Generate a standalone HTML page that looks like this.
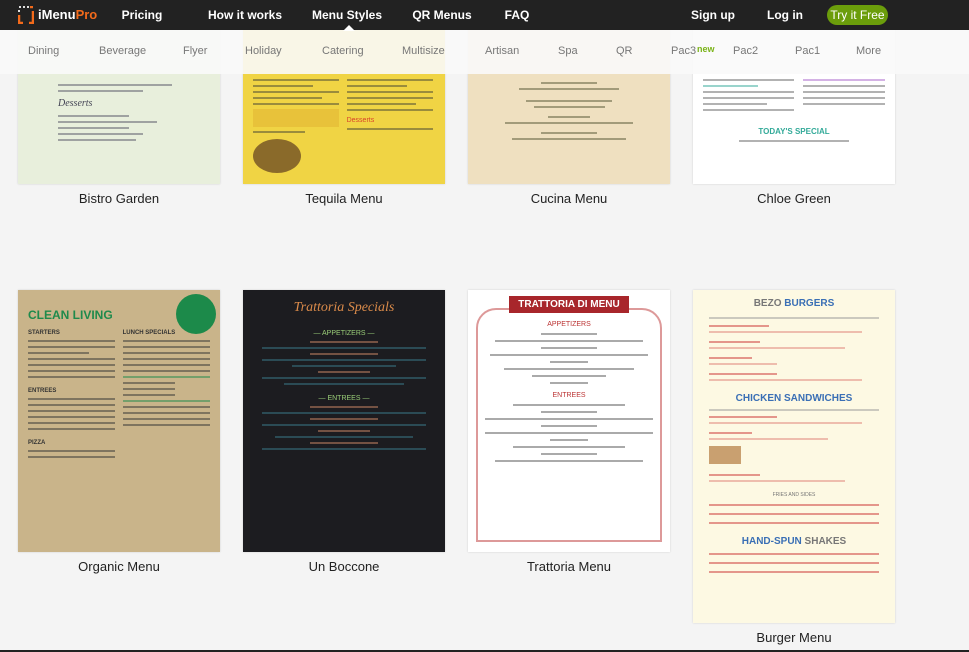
<!DOCTYPE html>
<html><head><meta charset="utf-8"><style>
*{margin:0;padding:0;box-sizing:border-box}
body{width:969px;height:652px;overflow:hidden;background:#f4f4f4;font-family:"Liberation Sans",sans-serif;position:relative}
.nav{position:absolute;top:0;left:0;width:969px;height:30px;background:#222;z-index:10}
.nav a{position:absolute;top:8px;color:#fff;font-size:12px;font-weight:bold;transform:translateX(-50%);white-space:nowrap}
.try{position:absolute;left:827px;top:5px;width:61px;height:20px;border-radius:10px;background:#6b9d0b;color:#fff;font-size:12px;text-align:center;line-height:20px}
.tri{position:absolute;left:343px;top:25px;width:0;height:0;border-left:6px solid transparent;border-right:6px solid transparent;border-bottom:6px solid #fff;z-index:11}
.sub{position:absolute;top:30px;left:0;width:969px;height:44px;background:rgba(250,250,250,0.9);z-index:9}
.sub span{position:absolute;top:15px;font-size:11px;color:#777}
.th{position:absolute;overflow:hidden;box-shadow:0 0 2px rgba(0,0,0,.15)}
.cap{position:absolute;font-size:13px;color:#222;text-align:center;width:202px}
.l{height:2px;margin:4px 0;background:currentColor;opacity:.5}
</style></head><body>
<div class="nav">
<svg style="position:absolute;left:18px;top:6px" width="16" height="18" viewBox="0 0 16 18"><path d="M1 1h2M5 1h2M9 1h2M1 4v2" stroke="#ddd" stroke-width="2" fill="none"/><path d="M1 9v8h4M11 17h4V5M12 1h3" stroke="#f26a1b" stroke-width="2.5" fill="none"/></svg>
<div style="position:absolute;left:38px;top:7px;font-size:13px;font-weight:bold;color:#fff">iMenu<span style="color:#f26a1b">Pro</span></div>
<a style="left:142px">Pricing</a><a style="left:245px">How it works</a><a style="left:347px">Menu Styles</a><a style="left:442px">QR Menus</a><a style="left:517px">FAQ</a><a style="left:713px">Sign up</a><a style="left:785px">Log in</a>
<div class="try">Try it Free</div>
</div>
<div class="tri"></div>
<div class="sub">
<span style="left:28px">Dining</span><span style="left:99px">Beverage</span><span style="left:183px">Flyer</span><span style="left:245px">Holiday</span><span style="left:322px">Catering</span><span style="left:402px">Multisize</span><span style="left:485px">Artisan</span><span style="left:558px">Spa</span><span style="left:616px">QR</span><span style="left:671px">Pac3</span><span style="left:697px;top:14px;font-size:9px;color:#7ab317;font-weight:bold">new</span><span style="left:733px">Pac2</span><span style="left:795px">Pac1</span><span style="left:856px">More</span>
</div>

<!-- row 1 -->
<div class="th" style="left:18px;top:20px;width:202px;height:164px;background:#e8efdc;color:#556;padding:60px 20px 0 40px">
<div class="l" style="width:80%"></div><div class="l" style="width:60%"></div>
<div style="font-family:'Liberation Serif';font-style:italic;font-size:10px;color:#445;margin:6px 0">Desserts</div>
<div class="l" style="width:50%"></div><div class="l" style="width:70%"></div><div class="l" style="width:50%"></div><div class="l" style="width:60%"></div><div class="l" style="width:55%"></div>
</div>
<div class="th" style="left:243px;top:20px;width:202px;height:164px;background:#f0d444;color:#443;padding:55px 12px 0 10px">
<div style="width:48%;float:left"><div class="l"></div><div class="l" style="width:70%"></div><div class="l"></div><div class="l" style="width:80%"></div><div class="l"></div><div style="height:18px;background:#e8c23a;margin:4px 0"></div><div class="l" style="width:60%"></div><div style="width:48px;height:34px;border-radius:50%;background:#8a6a2a;margin-top:6px"></div></div>
<div style="width:48%;float:right"><div class="l"></div><div class="l" style="width:70%"></div><div class="l"></div><div class="l"></div><div class="l" style="width:80%"></div><div class="l"></div><div style="color:#d9452b;font-size:7px;margin-top:6px">Desserts</div><div class="l"></div></div>
</div>
<div class="th" style="left:468px;top:20px;width:202px;height:164px;background:#efe0c0;color:#553;padding:58px 30px 0;text-align:center">
<div class="l" style="width:40%;margin:4px auto"></div><div class="l" style="width:70%;margin:4px auto"></div><div class="l" style="width:60%;margin:10px auto 4px"></div><div class="l" style="width:50%;margin:4px auto"></div><div class="l" style="width:30%;margin:8px auto 4px"></div><div class="l" style="width:90%;margin:4px auto"></div><div class="l" style="width:40%;margin:8px auto 4px"></div><div class="l" style="width:80%;margin:4px auto"></div>
</div>
<div class="th" style="left:693px;top:20px;width:202px;height:164px;background:#fff;color:#666;padding:55px 10px 0">
<div style="width:50%;float:left"><div class="l"></div><div class="l" style="width:60%;color:#3a9"></div><div class="l"></div><div class="l"></div><div class="l" style="width:70%"></div><div class="l"></div></div>
<div style="width:45%;float:right"><div class="l" style="color:#a6c"></div><div class="l"></div><div class="l"></div><div class="l"></div><div class="l"></div></div>
<div style="clear:both;text-align:center;color:#3a9;font-size:8px;font-weight:bold;padding-top:12px">TODAY'S SPECIAL</div>
<div class="l" style="width:60%;margin:4px auto"></div>
</div>
<div class="cap" style="left:18px;top:191px">Bistro Garden</div>
<div class="cap" style="left:243px;top:191px">Tequila Menu</div>
<div class="cap" style="left:468px;top:191px">Cucina Menu</div>
<div class="cap" style="left:693px;top:191px">Chloe Green</div>

<!-- row 2 -->
<div class="th" style="left:18px;top:290px;width:202px;height:262px;background:#c9b48a;color:#333;padding:10px 10px">
<div style="color:#1f8a4c;font-weight:bold;font-size:12px;margin-top:8px">CLEAN LIVING</div>
<div style="position:absolute;right:4px;top:4px;width:40px;height:40px;border-radius:50%;background:#1c8a4a"></div>
<div style="width:48%;float:left;margin-top:8px"><div style="font-size:6px;font-weight:bold">STARTERS</div><div class="l"></div><div class="l"></div><div class="l" style="width:70%"></div><div class="l"></div><div class="l"></div><div class="l"></div><div class="l"></div><div style="font-size:6px;font-weight:bold;margin-top:10px">ENTREES</div><div class="l"></div><div class="l"></div><div class="l"></div><div class="l"></div><div class="l"></div><div class="l"></div><div style="font-size:6px;font-weight:bold;margin-top:10px">PIZZA</div><div class="l"></div><div class="l"></div></div>
<div style="width:48%;float:right;margin-top:8px"><div style="font-size:6px;font-weight:bold">LUNCH SPECIALS</div><div class="l"></div><div class="l"></div><div class="l"></div><div class="l"></div><div class="l"></div><div class="l"></div><div class="l" style="color:#1f8a4c"></div><div class="l" style="width:60%"></div><div class="l" style="width:60%"></div><div class="l" style="width:60%"></div><div class="l" style="color:#1f8a4c"></div><div class="l"></div><div class="l"></div><div class="l"></div><div class="l"></div></div>
</div>
<div class="th" style="left:243px;top:290px;width:202px;height:262px;background:#1c1c20;padding:10px 15px;text-align:center">
<div style="color:#d98a4a;font-family:'Liberation Serif';font-style:italic;font-size:14px">Trattoria Specials</div>
<div style="color:#9c7;font-size:7px;margin:14px 0 4px">— APPETIZERS —</div>
<div class="l" style="color:#c86;width:40%;margin:4px auto"></div><div class="l" style="color:#3a7a8a;width:95%;margin:4px auto"></div><div class="l" style="color:#c86;width:40%;margin:4px auto"></div><div class="l" style="color:#3a7a8a;width:95%;margin:4px auto"></div><div class="l" style="color:#3a7a8a;width:60%;margin:4px auto"></div><div class="l" style="color:#c86;width:30%;margin:4px auto"></div><div class="l" style="color:#3a7a8a;width:95%;margin:4px auto"></div><div class="l" style="color:#3a7a8a;width:70%;margin:4px auto"></div>
<div style="color:#9c7;font-size:7px;margin:10px 0 4px">— ENTREES —</div>
<div class="l" style="color:#c86;width:40%;margin:4px auto"></div><div class="l" style="color:#3a7a8a;width:95%;margin:4px auto"></div><div class="l" style="color:#c86;width:40%;margin:4px auto"></div><div class="l" style="color:#3a7a8a;width:95%;margin:4px auto"></div><div class="l" style="color:#c86;width:30%;margin:4px auto"></div><div class="l" style="color:#3a7a8a;width:80%;margin:4px auto"></div><div class="l" style="color:#c86;width:40%;margin:4px auto"></div><div class="l" style="color:#3a7a8a;width:95%;margin:4px auto"></div>
</div>
<div class="th" style="left:468px;top:290px;width:202px;height:262px;background:#fff;padding:6px 8px;text-align:center;color:#555">
<div style="position:absolute;left:8px;top:18px;right:8px;bottom:10px;border:2px double #d99;border-radius:20px 20px 0 0"></div>
<div style="position:relative;background:#a8262b;color:#fff;font-size:10px;font-weight:bold;width:120px;margin:0 auto;padding:3px 0">TRATTORIA DI MENU</div>
<div style="color:#b33;font-size:7px;margin:8px 0 4px">APPETIZERS</div>
<div class="l" style="width:30%;margin:5px auto"></div><div class="l" style="width:80%;margin:4px auto"></div><div class="l" style="width:30%;margin:5px auto"></div><div class="l" style="width:85%;margin:4px auto"></div><div class="l" style="width:20%;margin:5px auto"></div><div class="l" style="width:70%;margin:4px auto"></div><div class="l" style="width:40%;margin:5px auto"></div><div class="l" style="width:20%;margin:5px auto"></div>
<div style="color:#b33;font-size:7px;margin:8px 0 4px">ENTREES</div>
<div class="l" style="width:60%;margin:5px auto"></div><div class="l" style="width:30%;margin:5px auto"></div><div class="l" style="width:90%;margin:4px auto"></div><div class="l" style="width:30%;margin:5px auto"></div><div class="l" style="width:90%;margin:4px auto"></div><div class="l" style="width:20%;margin:5px auto"></div><div class="l" style="width:60%;margin:4px auto"></div><div class="l" style="width:30%;margin:5px auto"></div><div class="l" style="width:80%;margin:4px auto"></div>
</div>
<div class="th" style="left:693px;top:290px;width:202px;height:333px;background:#fdf9e3;padding:8px 16px;color:#c33">
<div style="text-align:center;font-weight:bold;font-size:10px;color:#3a6fb5"><span style="color:#777">BEZO</span> BURGERS</div>
<div class="l" style="margin:8px 0 6px;color:#999"></div>
<div class="l" style="width:35%"></div><div class="l" style="width:90%;opacity:.3"></div><div class="l" style="width:30%;margin-top:8px"></div><div class="l" style="width:80%;opacity:.3"></div><div class="l" style="width:25%;margin-top:8px"></div><div class="l" style="width:40%;opacity:.3"></div><div class="l" style="width:40%;margin-top:8px"></div><div class="l" style="width:90%;opacity:.3"></div>
<div style="text-align:center;font-weight:bold;font-size:10px;color:#3a6fb5;margin-top:12px">CHICKEN SANDWICHES</div>
<div class="l" style="margin:5px 0;color:#999"></div>
<div class="l" style="width:40%"></div><div class="l" style="width:90%;opacity:.3"></div><div class="l" style="width:25%;margin-top:8px"></div><div class="l" style="width:70%;opacity:.3"></div>
<div style="width:32px;height:18px;background:#c9a070;margin-top:6px"></div>
<div class="l" style="width:30%;margin-top:10px"></div><div class="l" style="width:80%;opacity:.3"></div>
<div style="text-align:center;font-size:5px;color:#777;margin-top:10px">FRIES AND SIDES</div>
<div class="l" style="margin-top:6px"></div><div class="l" style="margin-top:7px"></div><div class="l" style="margin-top:7px"></div>
<div style="text-align:center;font-weight:bold;font-size:10px;color:#3a6fb5;margin-top:12px">HAND-SPUN <span style="color:#777">SHAKES</span></div>
<div class="l" style="margin-top:6px"></div><div class="l" style="margin-top:7px"></div><div class="l" style="margin-top:7px"></div>
</div>
<div class="cap" style="left:18px;top:559px">Organic Menu</div>
<div class="cap" style="left:243px;top:559px">Un Boccone</div>
<div class="cap" style="left:468px;top:559px">Trattoria Menu</div>
<div class="cap" style="left:693px;top:630px">Burger Menu</div>
<div style="position:absolute;left:0;top:650px;width:969px;height:2px;background:#222"></div>
</body></html>
